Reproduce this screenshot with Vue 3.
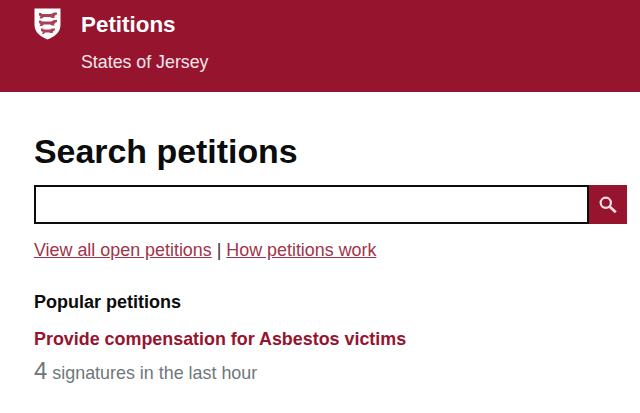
<script setup>
</script>

<template>
  <div class="page">
    <header class="header">
      <svg class="crest" width="27" height="32" viewBox="0 0 27 32">
        <path d="M0.5 0.5H26.5V17C26.500 25 19.500 29 13.500 31.500C7.500 29 0.500 25 0.500 17Z" fill="#fff" />
        <g fill="#96142e" opacity=".8">
          <path d="M5 5H7L8 6H17L20 4.500H23V6.500L21 7.500L20 9.500L21.500 10H18L16 9H10L8 10.500H5.500L6.500 8.500L5 7.500Z" />
          <path d="M5 12.500H7L8 13.500H17L20 12H23V14L21 15L20 17L21.500 17.500H18L16 16.500H10L8 18H5.500L6.500 16L5 15Z" />
          <path d="M7 20.500H9L10 21.500H16L18 20.500H21V22L19.500 23L18.500 24.500L19.500 25H16.500L15 24.500H11L10 26H8L9 24L7 23Z" />
        </g>
      </svg>
      <div class="titles">
        <div class="brand">Petitions</div>
        <div class="sub">States of Jersey</div>
      </div>
    </header>
    <main class="main">
      <h1>Search petitions</h1>
      <form class="search" @submit.prevent>
        <input class="field" type="text" aria-label="Search petitions" />
        <button class="go" type="submit" aria-label="Search">
          <svg width="20" height="20" viewBox="0 0 18 18" fill="none" stroke="#f8dfe3">
            <circle cx="7" cy="7" r="4.6" stroke-width="2" />
            <path d="M10.6 10.6L16 15.6" stroke-width="2.4" />
          </svg>
        </button>
      </form>
      <p class="links"><a href="#">View all open petitions</a> | <a href="#">How petitions work</a></p>
      <h2>Popular petitions</h2>
      <a class="petition" href="#">Provide compensation for Asbestos victims</a>
      <p class="count"><span class="num">4</span> signatures in the last hour</p>
    </main>
  </div>
</template>

<style>
html, body { margin: 0; background: #fff; }
</style>

<style scoped>
.page {
  width: 640px;
  height: 413px;
  overflow: hidden;
  font-family: "Liberation Sans", Arial, sans-serif;
  background: #fff;
  color: #0b0c0c;
}
.header {
  height: 92px;
  box-sizing: border-box;
  background: #96142e;
  color: #fff;
  display: flex;
  align-items: flex-start;
  gap: 20px;
  padding: 8px 0 0 34px;
}
.crest { flex: none; }
.titles { padding-top: 5px; }
.brand { font-size: 22.4px; font-weight: 700; line-height: 23px; }
.sub { font-size: 17.8px; line-height: 20px; margin-top: 16px; color: #f6e6e9; }
.main { padding: 0 13px 0 34px; }
h1 {
  margin: 40px 0 0;
  font-size: 33.9px;
  line-height: 39px;
  font-weight: 700;
  color: #0b0c0c;
}
.search { display: flex; margin-top: 14px; height: 39px; }
.field {
  flex: 1;
  min-width: 0;
  box-sizing: border-box;
  height: 39px;
  border: 2px solid #0b0c0c;
  padding: 0 6px;
  margin: 0;
  background: #fff;
  outline: none;
  border-radius: 0;
}
.go {
  flex: none;
  width: 38px;
  height: 39px;
  border: 0;
  padding: 0;
  background: #96142e;
  display: flex;
  align-items: center;
  justify-content: center;
}
.links { margin: 15px 0 0; font-size: 17.9px; line-height: 23px; color: #333; }
.links a { color: #a0344a; text-decoration: underline; }
h2 { margin: 29px 0 0; font-size: 18px; line-height: 22px; font-weight: 700; }
.petition {
  display: block;
  margin-top: 15px;
  font-size: 17.9px;
  line-height: 23px;
  font-weight: 700;
  color: #96142e;
  text-decoration: none;
}
.count { margin: 8px 0 0; font-size: 17.9px; line-height: 24px; color: #6f777b; }
.num { font-size: 24px; }
</style>
